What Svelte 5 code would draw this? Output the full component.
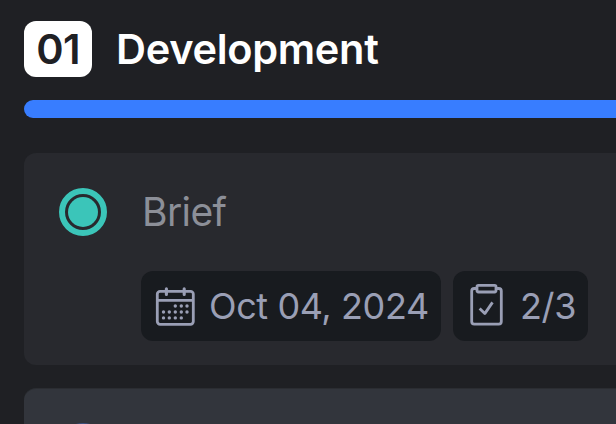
<script>
  let stage = { number: '01', title: 'Development' };
  let task = { title: 'Brief', date: 'Oct 04, 2024', progress: '2/3' };

  // Days shown in the calendar icon, first row starts mid-week
  const days = [
    [20.3, 26], [26.3, 26], [32, 26],
    [8.5, 32], [14.3, 32], [20.3, 32], [26.3, 32], [32, 32],
    [8.5, 37.9], [14.3, 37.9], [20.3, 37.9], [26.3, 37.9],
  ];
</script>

<main class="board">
  <header class="stage">
    <span class="number">{stage.number}</span>
    <h1>{stage.title}</h1>
  </header>

  <div class="bar"></div>

  <section class="card">
    <div class="row">
      <span class="status"><span class="dot"></span></span>
      <h2>{task.title}</h2>
    </div>

    <div class="chips">
      <div class="chip date">
        <svg width="40" height="46" viewBox="0 0 40 46" fill="none" stroke="currentColor">
          <rect x="2.3" y="11.3" width="36" height="33" rx="2.8" stroke-width="2.8" />
          <path d="M2.5 20.3H38" stroke-width="2.8" />
          <path d="M11.4 8.7V14.4M29.2 8.7V14.4" stroke-width="3.1" stroke-linecap="round" />
          {#each days as [x, y]}
            <circle cx={x} cy={y} r="1.7" fill="currentColor" stroke="none" />
          {/each}
        </svg>
        <span>{task.date}</span>
      </div>

      <div class="chip tasks">
        <svg width="34" height="46" viewBox="0 0 34 46" fill="none" stroke="currentColor" stroke-width="2.8">
          <path d="M7 8.5H4.3Q1.7 8.5 1.7 11.1V41.6Q1.7 44.2 4.3 44.2H28.7Q31.3 44.2 31.3 41.6V11.1Q31.3 8.5 28.7 8.5H26" />
          <rect x="7" y="5.4" width="19" height="6.6" rx="1.4" />
          <path d="M9.6 28.4L14.8 33.6L22.5 22.4" stroke-linejoin="round" />
        </svg>
        <span>{task.progress}</span>
      </div>
    </div>
  </section>

  <section class="card next">
    <span class="status"></span>
  </section>
</main>

<style>
  :global(body) {
    margin: 0;
    background: #1f2024;
  }

  .board {
    box-sizing: border-box;
    width: 616px;
    height: 424px;
    padding: 21px 0 0 24px;
    overflow: hidden;
    background: #1f2024;
    font-family: Inter, sans-serif;
  }

  .stage {
    display: flex;
    align-items: center;
    gap: 24px;
    height: 56px;
  }

  .number {
    width: 68px;
    height: 56px;
    border-radius: 12px;
    background: #fff;
    color: #1f2024;
    font-size: 41.5px;
    font-weight: 600;
    line-height: 56px;
    letter-spacing: -0.8px;
    text-align: center;
  }

  h1 {
    margin: 0;
    color: #fff;
    font-size: 41.5px;
    font-weight: 600;
    line-height: 56px;
    letter-spacing: -0.3px;
  }

  .bar {
    height: 18px;
    margin-top: 23px;
    border-radius: 9px 0 0 9px;
    background: #387dff;
  }

  .card {
    box-sizing: border-box;
    height: 212px;
    margin-top: 35px;
    padding: 35px 0 0 35px;
    border-radius: 12px 0 0 12px;
    background: #28292e;
  }

  .row {
    display: flex;
    align-items: center;
    gap: 35px;
    height: 48px;
  }

  .status {
    display: flex;
    flex: none;
    align-items: center;
    justify-content: center;
    box-sizing: border-box;
    width: 48px;
    height: 48px;
    border: 6px solid #3bc5b9;
    border-radius: 50%;
  }

  .dot {
    width: 30px;
    height: 30px;
    border-radius: 50%;
    background: #3bc5b9;
  }

  h2 {
    margin: 0;
    color: #8c8f98;
    font-size: 39px;
    font-weight: 400;
    line-height: 48px;
    letter-spacing: -0.6px;
  }

  .chips {
    display: flex;
    gap: 12px;
    margin: 35px 0 0 82px;
  }

  .chip {
    display: flex;
    align-items: center;
    box-sizing: border-box;
    height: 70px;
    border-radius: 12px;
    background: #181b1f;
    color: #9a9fb5;
    font-size: 36px;
    line-height: 70px;
    letter-spacing: -0.4px;
    white-space: nowrap;
  }

  .chip svg {
    flex: none;
    margin-bottom: 6px;
  }

  .date {
    width: 300px;
    padding-left: 14px;
    gap: 14px;
  }

  .tasks {
    width: 135px;
    padding-left: 17px;
    gap: 16px;
  }

  .next {
    height: 212px;
    margin-top: 23px;
    padding-top: 34px;
    border-top: 1px solid #2b2d32;
    background: #32353c;
  }

  .next .status {
    border-color: #3d5180;
  }
</style>
